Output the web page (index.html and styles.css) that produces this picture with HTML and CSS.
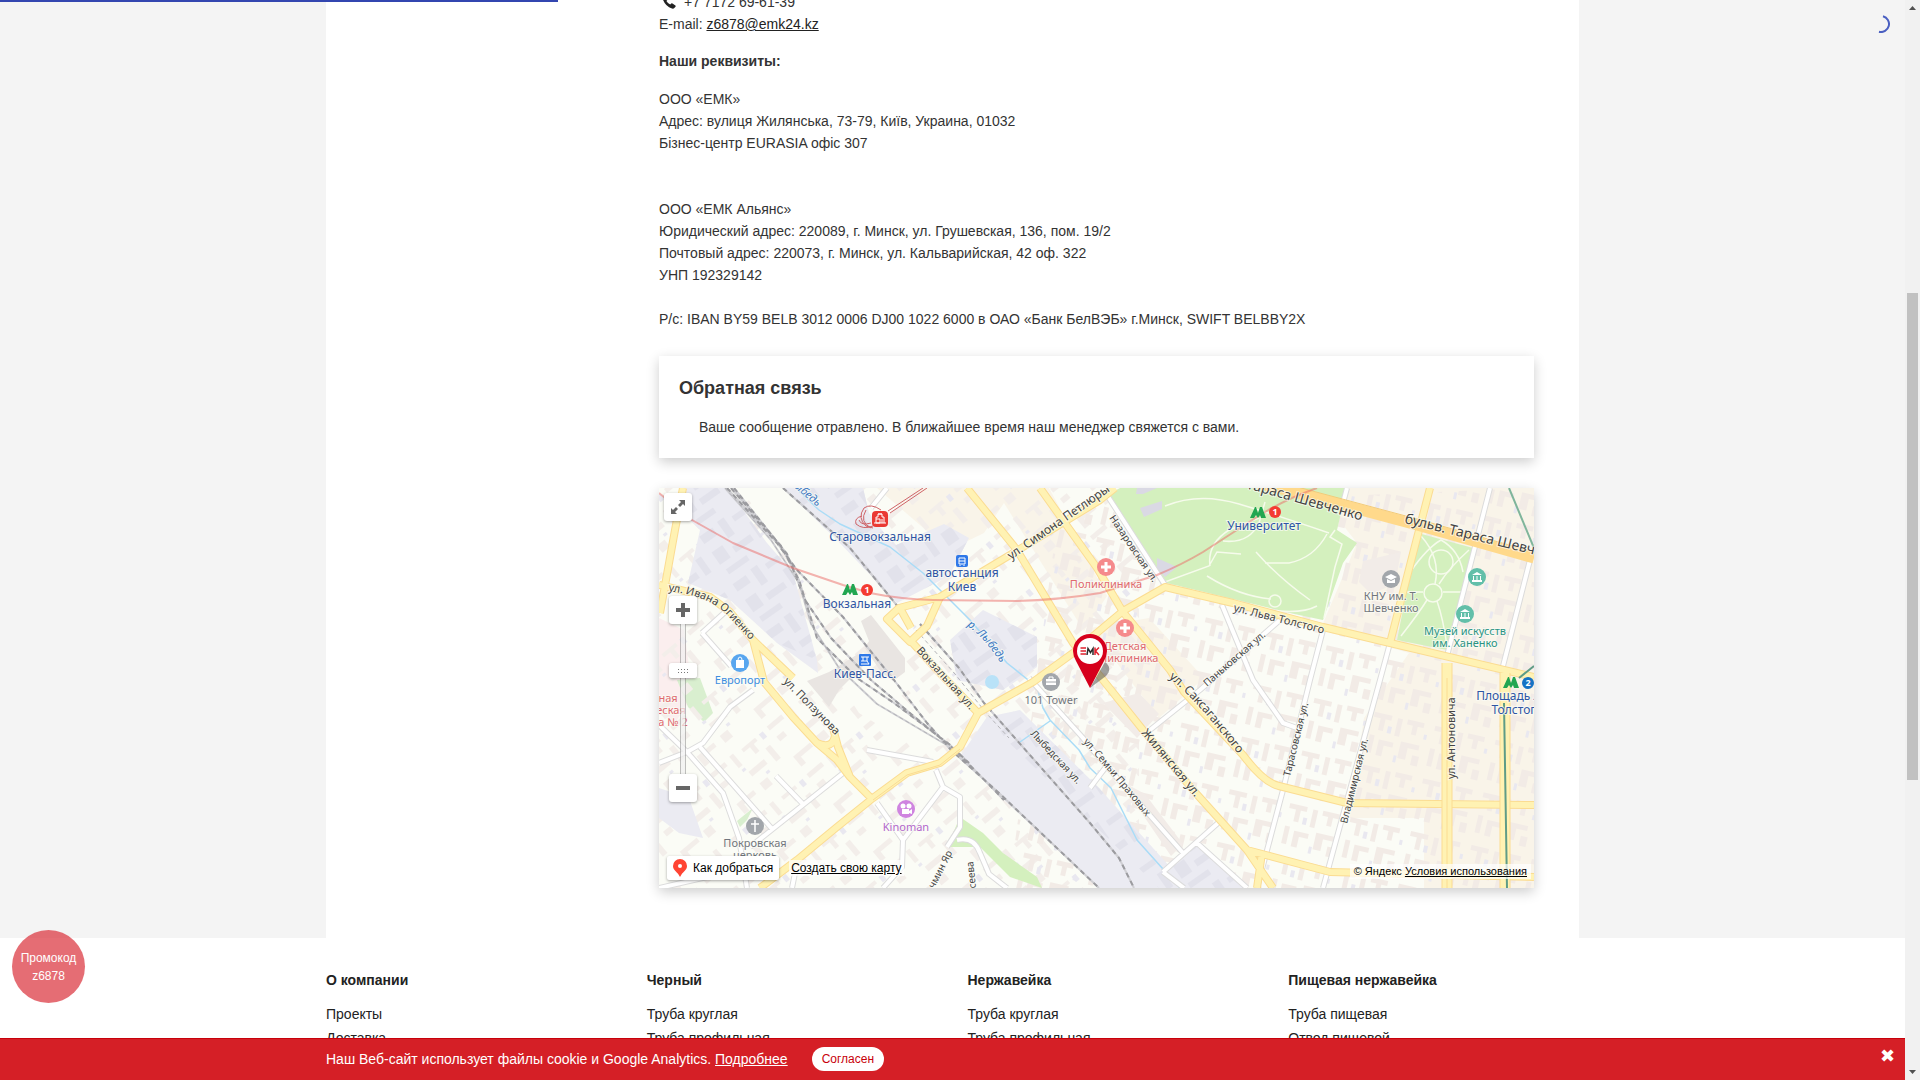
FILE: index.html
```html
<!DOCTYPE html>
<html lang="ru">
<head>
<meta charset="utf-8">
<meta name="viewport" content="width=device-width, initial-scale=1">
<title>Контакты — ЕМК</title>
<link rel="stylesheet" href="styles.css">
</head>
<body>
<div class="window">
  <div class="page">
    <main class="container content">
      <div class="column">
        <p class="phone">
          <svg class="phone-icon" viewBox="0 0 14 14" aria-hidden="true"><path fill="#222" d="M3.2 .6 5.600 3.600Q6 4.200 5.400 4.900L4.400 5.900Q5.800 8.200 8.200 9.600L9.200 8.600Q9.800 8.100 10.500 8.500L13.400 10.600Q13.900 11.100 13.500 11.700L12.300 13.100Q11.500 13.900 10 13.500Q3.200 11.200.8 4.200Q.3 2.700 1.100 1.700L2.200.7Q2.700.2 3.200.6Z"/></svg>
          <span>+7 7172 69-61-39</span>
        </p>
        <p>E-mail: <a class="mail" href="mailto:z6878@emk24.kz">z6878@emk24.kz</a></p>
        <h2 class="subtitle">Наши реквизиты:</h2>
        <p class="details">ООО «ЕМК»<br>Адрес: вулиця Жилянська, 73-79, Київ, Украина, 01032<br>Бізнес-центр EURASIA офіс 307<br><br><br>ООО «ЕМК Альянс»<br>Юридический адрес: 220089, г. Минск, ул. Грушевская, 136, пом. 19/2<br>Почтовый адрес: 220073, г. Минск, ул. Кальварийская, 42 оф. 322<br>УНП 192329142<br><br>P/c: IBAN BY59 BELB 3012 0006 DJ00 1022 6000 в ОАО «Банк БелВЭБ» г.Минск, SWIFT BELBBY2X</p>

        <section class="card">
          <h3>Обратная связь</h3>
          <p>Ваше сообщение отравлено. В ближайшее время наш менеджер свяжется с вами.</p>
        </section>

        <section class="map" aria-label="Карта">
          <svg class="map-canvas" viewBox="0 0 875 400" preserveAspectRatio="xMidYMid slice">
            <defs>
              <pattern id="west" width="74" height="62" patternUnits="userSpaceOnUse" patternTransform="rotate(-40)">
                <path fill="#f3eeea" d="M3 4h19v5H3zM29 3h5v15h-5zM43 5h18v4h-5v9h-5v-9h-8zM4 18h9v6H4zM34 27h20v6H34zM62 20h6v17h-6zM4 44h22v5H10v8H4zM35 43h10v9H35z"/>
                <path fill="#e9e8f0" d="M66 5h5v7h-5zM30 21h4v3h-4zM47 38h4v3h-4z"/>
              </pattern>
              <pattern id="east" width="62" height="54" patternUnits="userSpaceOnUse" patternTransform="rotate(13)">
                <path fill="#f2ebe6" d="M4 3h18v5h-6v12h-5V8H4zM28 4h5v18h-5zM38 3h17v5h-6v9h-5V8h-6zM4 26h5v18H4zM14 29h15v5h-9v11h-6zM36 26h19v5H44v12h-8zM50 37h7v10h-7z"/>
                <path fill="#e9e8f0" d="M20 14h4v7h-4zM32 41h3v7h-3zM57 14h3v5h-3z"/>
              </pattern>
              <pattern id="works" width="66" height="58" patternUnits="userSpaceOnUse" patternTransform="rotate(-35)">
                <path fill="#e2e2eb" d="M5 5h16v9H5zM28 3h8v20h-8zM43 7h17v6H43zM6 25h13v15H6zM26 32h22v7H26zM54 22h7v19h-7zM8 47h25v6H8z"/>
              </pattern>
              <path id="lbl-ogienko" d="M9 103Q50 108 67 126T96 157"/>
              <path id="lbl-polzunova" d="M124 194L181 252"/>
              <path id="lbl-vokzalnaya" d="M257 163L281 189 318 230"/>
              <path id="lbl-lybed" d="M308 138Q330 152 350 190"/>
              <path id="lbl-lybed-top" d="M129 -6Q150 12 172 30"/>
              <path id="lbl-petlyury" d="M352 72L464 -6"/>
              <path id="lbl-shev-a" d="M572 -4L715 36"/>
              <path id="lbl-shev-b" d="M745 35L930 80"/>
              <path id="lbl-saks" d="M510 190Q535 208 590 280"/>
              <path id="lbl-prah" d="M424 254Q448 280 496 340"/>
            </defs>
            <rect width="875" height="400" fill="#fbfcf6"/>
            <path fill="#f9f4e9" d="M218 0H390L448 108 425 143 345 15 325 45 290 62ZM655 0H875V400H765V330H690L705 230 750 165 662 140 698 55ZM431 140 490 130 545 190 500 230Z"/>
            <path fill="#fbeeee" d="M0 130 25 142 34 207 16 235 0 226Z"/>
            <path fill="#d9efcf" d="M18 192 41 190 54 225 45 234 29 219ZM78 333 94 320 88 332 81 339Z"/>
            <rect width="480" height="400" fill="url(#west)"/>
            <path fill="url(#east)" d="M400 20 875 0V400H350Z"/>
            <path fill="#fbfcf6" d="M82 0 124 0 191 60 256 136 240 180 184 129 138 82ZM158 160 235 200 290 256 260 262 200 225Z"/>
            <g id="industrial">
              <path fill="#ebebf2" d="M23 0H68L108 55 134 85 158 172 159 185 118 155 71 112 29 95 41 42 20 22ZM124 0H204L210 25 235 58 285 36 310 50 290 88 238 115 178 52ZM324 122 378 149V179L344 202 298 192 291 152ZM328 229 361 222 440 300 530 400H440L300 270ZM0 300 30 310 44 350 20 345 0 330ZM504 383 538 357 585 400H520Z"/>
              <path fill="url(#works)" d="M23 0H68L108 55 134 85 158 172 118 155 71 112 29 95 41 42ZM124 0H204L210 25 235 58 285 36 310 50 290 88 238 115 178 52ZM324 122 378 149V179L344 202 298 192 291 152ZM335 240 361 222 440 300 530 400H500ZM504 383 538 357 585 400H520Z"/>
              <path fill="#e9e5e2" d="M202 133 212 127 246 170 246 184 234 193 222 184 206 160 210 153ZM148 193 170 184 199 166 206 176 180 202 170 219Z"/>
              <path fill="#f2ece8" d="M704 73 742 64 736 96 712 106 700 94ZM444 215 480 205 500 226 478 250ZM460 292 486 306 524 356 512 368Z"/>
            </g>
            <g id="parks" fill="#d4f0be">
              <path d="M448 7 461 0H688L678 42 698 55 684 75 664 132 640 127 508 95 451 9Z"/>
              <path d="M759 45 814 60 788 162 738 152Z"/>
              <path d="M301 329 324 345 344 365 378 389 383 400 351 389 321 359 288 359Z"/>
              <path d="M588 363 603 367 598 382Z"/>
            </g>
            <path fill="#dad9e4" d="M478 0h20l-14 6h-7ZM481 20l22-7v8l-18 8ZM498 70l20 9-12 10-8-9Z"/>
            <g fill="none" stroke="#f6fbec" stroke-width="1.500">
              <path d="M506 18Q540 4 580 16T670 45M564 53Q590 56 600 35L606 14M597 64Q620 90 651 112M606 75H630Q655 70 668 46M506 94L550 78 558 64 582 66M548 88Q580 108 612 111M620 123Q645 125 658 118M676 42 671 49 683 56 676 79 665 130M551 78Q548 56 570 42L600 30"/>
              <circle cx="616" cy="113" r="6"/><circle cx="774" cy="105" r="9"/><circle cx="782" cy="74" r="12"/>
              <path d="M762 48Q782 70 776 96M810 62Q790 80 780 96M742 148Q760 125 768 112M788 158Q784 130 778 113M764 104H740M784 104H802M752 83Q768 60 782 52 800 62 804 84"/>
            </g>
            <path fill="none" stroke="#a9dcf7" stroke-width="1.500" stroke-linejoin="round" d="M137 0 160 22 181 36 231 59 264 85 311 132 348 175 378 199 384 220 391 232 420 262 431 280 452 300 458 312 478 352 521 400M361 254 391 233"/>
            <circle cx="333" cy="194" r="7" fill="#b9e2f8"/>
            <g fill="none" stroke-linejoin="round">
              <g id="minor-roads">
                <path stroke="#dcdcdc" stroke-width="6" d="M448 7 506 97M664 142 651 192 624 302 598 400M731 155 721 192 664 400M621 132 541 202 491 242M563 117 594 192 624 235 638 240M831 0 788 168M871 72 843 182M370 190 424 250 431 259 524 365M504 384 559 335M538 355 588 400M504 384 525 400M218 315 244 352 243 379 224 400M244 352 284 299 277 282M284 299 301 309V339L288 359M298 352Q315 348 321 365L330 386 348 400M0 275 28 264 44 255 71 219 94 202M0 237 28 264 64 305 80 350 88 400M41 259 114 342M188 282 91 359M43 145 72 178M65 125 43 145M117 288 144 316M208 262 274 274M0 400 70 384M431 300 446 280M688 0 684 15M212 20 228 0M133 400 136 385"/>
                <path stroke="#fff" stroke-width="4" d="M448 7 506 97M664 142 651 192 624 302 598 400M731 155 721 192 664 400M621 132 541 202 491 242M563 117 594 192 624 235 638 240M831 0 788 168M871 72 843 182M370 190 424 250 431 259 524 365M504 384 559 335M538 355 588 400M504 384 525 400M218 315 244 352 243 379 224 400M244 352 284 299 277 282M284 299 301 309V339L288 359M298 352Q315 348 321 365L330 386 348 400M0 275 28 264 44 255 71 219 94 202M0 237 28 264 64 305 80 350 88 400M41 259 114 342M188 282 91 359M43 145 72 178M65 125 43 145M117 288 144 316M208 262 274 274M0 400 70 384M431 300 446 280M688 0 684 15M212 20 228 0M133 400 136 385"/>
              </g>
              <g id="railways">
                <path stroke="#cfcfd3" stroke-width="2" d="M68 0 118 55 138 82 184 129 235 192 268 235 292 262 340 305 440 400M72 0 122 58 140 92 158 150 198 190 235 215 290 256 310 275M75 0 128 66 146 112 172 150 212 192 252 226 296 262 345 312M124 0 191 60 240 120M261 136 300 180 325 215 431 335 460 370 475 400M66 0 112 52 140 95 152 136 180 180 218 216 286 256"/>
                <path stroke="#9b9b9f" stroke-width="2" stroke-dasharray="5 4" d="M68 0 118 55 138 82 184 129 235 192 268 235 292 262 340 305 440 400M72 0 122 58 140 92 158 150 198 190 235 215 290 256 310 275M75 0 128 66 146 112 172 150 212 192 252 226 296 262 345 312M124 0 191 60 240 120M261 136 300 180 325 215 431 335 460 370 475 400"/>
                <path stroke="#b5b5b9" stroke-width="1" stroke-dasharray="4 3" d="M257 142 296 186 328 226 350 250M66 0 112 52 140 95 152 136 180 180 218 216 286 256"/>
              </g>
              <g id="main-roads">
                <path stroke="#fbdc92" stroke-width="8" d="M24 0 16 42 1 125M0 97 51 109 71 124 94 152 105 194 134 229 158 255 178 272 191 289 214 312M94 152 134 190M174 240 179 259 191 289M158 255Q174 262 176 247M308 0 358 62 414 155 444 192 484 242 534 302 588 362 614 400M381 0 438 80 464 124 511 182 525 204 584 267Q605 295 620 298L688 315 875 317M101 400 138 372 178 339 214 310 248 285 281 275 301 259 319 225 374 194 414 165 464 123 506 99 574 115 664 139 731 155 875 189M588 362 671 384 875 389M771 0 758 50 731 155M281 109 351 67 441 12 456 0M603 365 598 400M251 152 278 182 319 225M281 109 240 120 228 131 251 154 268 138 281 109M242 122 252 140"/>
                <path stroke="#fff2b3" stroke-width="6" d="M24 0 16 42 1 125M0 97 51 109 71 124 94 152 105 194 134 229 158 255 178 272 191 289 214 312M94 152 134 190M174 240 179 259 191 289M158 255Q174 262 176 247M308 0 358 62 414 155 444 192 484 242 534 302 588 362 614 400M381 0 438 80 464 124 511 182 525 204 584 267Q605 295 620 298L688 315 875 317M101 400 138 372 178 339 214 310 248 285 281 275 301 259 319 225 374 194 414 165 464 123 506 99 574 115 664 139 731 155 875 189M588 362 671 384 875 389M771 0 758 50 731 155M281 109 351 67 441 12 456 0M603 365 598 400M251 152 278 182 319 225M281 109 240 120 228 131 251 154 268 138 281 109M242 122 252 140"/>
                <path stroke="#fbdc92" stroke-width="11" d="M788 175V400M846 185V400"/>
                <path stroke="#fff2b3" stroke-width="9" d="M788 175V400M846 185V400"/>
                <path stroke="#fbdc92" stroke-width="1" d="M788 190V400M214 312 248 287 281 277 301 261"/>
                <path stroke="#ffd98b" stroke-width="11" d="M560 -14 631 3 758 37 875 70"/>
                <path stroke="#f3cb78" stroke-width="1" d="M631 -3 758 31 875 64"/>
              </g>
              <path stroke="#ec6a66" stroke-opacity=".5" stroke-width="2" d="M0 5 33 32 74 55 134 80 184 97 211 105Q240 111 274 112L358 113Q400 112 441 105L498 87Q524 76 544 64L598 29Q624 12 658 0"/>
              <path stroke="#7fb59b" stroke-width="2" d="M850 0 875 60"/>
              <path stroke="#5f9c86" stroke-width="2" d="M845 215 848 400M860 190 875 178"/>
              <path stroke="#cf6468" stroke-width="1" d="M268 0 231 25M264 0 229 23M205 20Q212 15 222 22M205 20Q198 30 207 38L214 40M203 28Q195 30 197 36 204 42 214 38M200 32Q202 38 212 35M207 22Q200 34 212 40"/>
            </g>

            <g class="street">
              <text><textPath href="#lbl-ogienko">ул. Ивана Огиенко</textPath></text>
              <text><textPath href="#lbl-polzunova">ул. Ползунова</textPath></text>
              <text><textPath href="#lbl-vokzalnaya">Вокзальная ул.</textPath></text>
              <text class="big"><textPath href="#lbl-petlyury">ул. Симона Петлюры</textPath></text>
              <text class="huge"><textPath href="#lbl-shev-a">в. Тараса Шевченко</textPath></text>
              <text class="huge"><textPath href="#lbl-shev-b">бульв. Тараса Шевченко</textPath></text>
              <text class="big"><textPath href="#lbl-saks">ул. Саксаганского</textPath></text>
              <text class="small"><textPath href="#lbl-prah">ул. Семьи Праховых</textPath></text>
              <text class="small" transform="translate(450 30) rotate(56)">Назаровская ул.</text>
              <text transform="translate(574 123) rotate(14)">ул. Льва Толстого</text>
              <text class="small" transform="translate(548 199) rotate(-41)">Паньковская ул.</text>
              <text class="big" transform="translate(482 245) rotate(50)">Жилянская ул.</text>
              <text class="small" transform="translate(371 246) rotate(47)">Лыбедская ул.</text>
              <text class="small" transform="translate(631 289) rotate(-76)">Тарасовская ул.</text>
              <text class="small" transform="translate(688 336) rotate(-76)">Владимирская ул.</text>
              <text transform="translate(796 291) rotate(-90)">ул. Антоновича</text>
              <text class="small" transform="translate(275 401) rotate(-63)">чмин Яр</text>
              <text class="small" transform="translate(317 400) rotate(-96)">сеева</text>
            </g>
            <g class="river">
              <text><textPath href="#lbl-lybed">р. Лыбедь</textPath></text>
              <text><textPath href="#lbl-lybed-top">Лыбедь</textPath></text>
            </g>
            <g class="poi transit">
              <text x="221" y="53">Старовокзальная</text>
              <text x="198" y="120">Вокзальная</text>
              <text x="303" y="89">автостанция</text>
              <text x="303" y="103">Киев</text>
              <text x="206" y="190">Киев-Пасс.</text>
              <text x="605" y="42">Университет</text>
              <text x="860" y="212">Площадь Льва</text>
              <text x="858" y="226">Толстого</text>
            </g>
            <g class="poi medical">
              <text x="447" y="100">Поликлиника</text>
              <text x="466" y="162">Детская</text>
              <text x="464" y="174">поликлиника</text>
              <text x="9" y="214">ная</text><text x="12" y="226">еская</text><text x="14" y="238">а № 2</text>
            </g>
            <g class="poi grey">
              <text x="732" y="112">КНУ им. Т.</text><text x="732" y="124">Шевченко</text>
              <text x="392" y="216">101 Tower</text>
              <text x="96" y="359">Покровская</text><text x="96" y="371">церковь</text>
            </g>
            <g class="poi museum"><text x="806" y="147">Музей искусств</text><text x="806" y="159">им. Ханенко</text></g>
            <g class="poi cinema"><text x="247" y="343">Kinoman</text></g>
            <g class="poi shop"><text x="81" y="196">Европорт</text></g>

            <g id="badges">
              <rect x="213" y="23" width="16" height="16" rx="4" fill="#ea3a34"/>
              <path fill="none" stroke="#fff" stroke-width="1" d="M217 31V29H219V26H223V29H225V31M219 26H223M217 31H221V35H217ZM223 31V35M215 35H227M225 31V35"/>
              <path fill="#22a651" d="M183 107 188 96H189L191 102 193 96H195L199 107H194L193 104 191 107 189 104 187 107Z"/>
              <circle cx="208" cy="102" r="6" fill="#f43b32"/>
              <path fill="#22a651" d="M591 30 596 19H597L599 25 601 19H603L607 30H602L601 27 599 30 597 27 595 30Z"/>
              <circle cx="616" cy="24" r="6" fill="#f43b32"/>
              <path fill="#22a651" d="M844 200 849 189H850L852 195 854 189H856L860 200H855L854 197 852 200 850 197 848 200Z"/>
              <circle cx="869" cy="195" r="6" fill="#1572c4"/>
              <rect x="297" y="67" width="12" height="12" rx="2" fill="#2f78e8"/>
              <path fill="none" stroke="#fff" stroke-width="1" d="M300 76V70H306V76ZM300 73H306M301 77V78M305 77V78"/>
              <rect x="200" y="166" width="12" height="12" rx="1" fill="#2f78e8"/>
              <path fill="none" stroke="#fff" stroke-width="1" d="M202 169H210M204 169V173M208 169V173M202 173H208L210 176M202 176H210"/>
              <g fill="#f58a8c"><circle cx="447" cy="79" r="9"/><circle cx="466" cy="140" r="9"/></g>
              <path stroke="#fff" stroke-width="3" d="M442 79H452M447 74V84M461 140H471M466 135V145"/>
              <g fill="#a2a6ab"><circle cx="732" cy="91" r="9"/><circle cx="392" cy="194" r="9"/><circle cx="96" cy="338" r="9"/></g>
              <path fill="#fff" d="M726 89 732 86 738 89 732 92ZM728 91 732 93 736 91V95H728ZM387 191h10v6h-10Z"/>
              <path stroke="#fff" stroke-width="1" fill="none" d="M390 191V189H394V191"/>
              <path stroke="#a2a6ab" stroke-width="1" d="M387 194H397"/>
              <path stroke="#fff" stroke-width="1.500" d="M96 332V344M92 336H100"/>
              <g fill="#62bfa9"><circle cx="818" cy="89" r="9"/><circle cx="806" cy="126" r="9"/></g>
              <path fill="#fff" d="M813 87 818 84 823 87ZM813 92h10v2h-10ZM801 124 806 121 811 124ZM801 129h10v2h-10Z"/>
              <path stroke="#fff" stroke-width="1" d="M814.500 88V92M818 88V92M821.500 88V92M802.500 125V129M806 125V129M809.500 125V129"/>
              <circle cx="247" cy="321" r="9" fill="#cf84e0"/>
              <circle cx="244" cy="318" r="2.500" fill="#fff"/><circle cx="250" cy="318" r="2.500" fill="#fff"/><path fill="#fff" d="M243 321h7v5h-7ZM250 323 253 321V326L250 325Z"/>
              <circle cx="81" cy="175" r="9" fill="#58a6ef"/>
              <path fill="#fff" d="M77 172h8v8h-8Z"/><path fill="none" stroke="#fff" d="M79 172Q79 169 81 169T83 172"/>
            </g>
            <g class="badge-text"><text x="208" y="105">1</text><text x="616" y="27">1</text><text x="869" y="198">2</text></g>

            <g id="placemark">
              <path fill="#444" fill-opacity=".5" d="M431 200 446 174Q454 180 447 188Z"/>
              <path fill="#d6001c" d="M431 200 417 173Q414 168 414 163A17 17 0 0 1 448 163Q448 168 445 173Z"/>
              <circle cx="431" cy="163" r="13" fill="#fff"/>
              <g fill="none" stroke-width="1.500"><path stroke="#df1f2e" d="M427 160H421.500M427 163H421.500M427 166H421.500M440 159.500 436.500 163 440 167M436 159.500V167"/><path stroke="#2b2b2b" d="M428 167 429 160.500 431.500 164.500 434 160.500V167"/></g>
            </g>
          </svg>

          <button class="map-btn expand" type="button" aria-label="Развернуть карту">
            <svg viewBox="0 0 28 28"><path fill="#666" d="M15 7h6v6l-2-2-3 3-2-2 3-3ZM13 21H7v-6l2 2 3-3 2 2-3 3Z"/></svg>
          </button>
          <div class="zoom">
            <button class="map-btn" type="button" aria-label="Приблизить"><svg viewBox="0 0 28 28"><path fill="#666" d="M12 7h4v5h5v4h-5v5h-4v-5H7v-4h5Z"/></svg></button>
            <input class="zoom-range" type="range" min="0" max="100" value="71" aria-label="Масштаб">
            <button class="map-btn" type="button" aria-label="Отдалить"><svg viewBox="0 0 28 28"><path fill="#666" d="M7 12h14v4H7Z"/></svg></button>
          </div>
          <div class="map-links">
            <button class="route" type="button">
              <svg viewBox="0 0 14 18" aria-hidden="true"><path fill="#f43" fill-rule="evenodd" d="M7 0a7 7 0 0 1 7 7c0 4-4 6-5.500 8.500L7 18 5.500 15.500C4 13 0 11 0 7a7 7 0 0 1 7-7Zm0 5a2 2 0 1 0 0 4 2 2 0 0 0 0-4Z"/></svg>
              <span>Как добраться</span>
            </button>
            <a class="create" href="#map">Создать свою карту</a>
          </div>
          <div class="copyright">© Яндекс <a href="#terms">Условия использования</a></div>
        </section>
      </div>
    </main>

    <footer class="footer">
      <div class="container footer-grid">
        <nav><h4>О компании</h4><a href="#projects">Проекты</a><a href="#delivery">Доставка</a></nav>
        <nav><h4>Черный</h4><a href="#b1">Труба круглая</a><a href="#b2">Труба профильная</a></nav>
        <nav><h4>Нержавейка</h4><a href="#n1">Труба круглая</a><a href="#n2">Труба профильная</a></nav>
        <nav><h4>Пищевая нержавейка</h4><a href="#p1">Труба пищевая</a><a href="#p2">Отвод пищевой</a></nav>
      </div>
    </footer>

    <div class="progress"></div>
    <svg class="spinner" viewBox="0 0 18 18" aria-hidden="true"><path fill="none" stroke="#4a5fc1" stroke-width="2" d="M11 1.300A8 8 0 0 1 7 16.800"/></svg>
    <div class="promo">Промокод<br>z6878</div>
    <div class="cookies">
      <div class="container cookies-row">
        <span>Наш Веб-сайт использует файлы cookie и Google Analytics. <a href="#more">Подробнее</a></span>
        <button class="agree" type="button">Согласен</button>
      </div>
      <button class="close" type="button" aria-label="Закрыть">✖</button>
    </div>
  </div>
  <div class="scrollbar" aria-hidden="true">
    <svg viewBox="0 0 15 16"><path fill="#505050" d="M4 10 7.500 6 11 10Z"/></svg>
    <div class="track"><div class="thumb"></div></div>
    <svg viewBox="0 0 15 16"><path fill="#505050" d="M4 6 7.500 10 11 6Z"/></svg>
  </div>
</div>
</body>
</html>
```
FILE: styles.css
```css
* { box-sizing: border-box; }

body {
  margin: 0;
  font: 14px/22px "Liberation Sans", Arial, sans-serif;
  color: #333;
  background: #f4f4f4;
}

p, h2, h3, h4 { margin: 0; }
button { margin: 0; padding: 0; border: 0; font-family: inherit; cursor: pointer; }

.window { display: flex; height: 100vh; overflow: hidden; }
.page { position: relative; flex: 1; min-width: 0; overflow: hidden; }
.container { width: calc(100% - 32px); max-width: 1253px; margin: 0 auto; }

/* The view is scrolled down, so the first line is cut by the window's top edge */
.content { margin-top: -9px; padding: 0 45px 50px 333px; background: #fff; }
.phone { display: flex; align-items: center; gap: 8px; padding-left: 3px; }
.phone-icon { width: 14px; height: 14px; }
.mail { color: #222; }
.subtitle { margin: 15px 0 16px; font-size: 14px; line-height: 22px; }

.card {
  margin: 26px 0 30px;
  padding: 20px;
  background: #fff;
  box-shadow: 0 4px 12px rgba(0, 0, 0, .2);
}
.card h3 { font-size: 18px; line-height: 24px; }
.card p { padding: 16px 20px 0; }

.map {
  position: relative;
  height: 400px;
  overflow: hidden;
  background: #fbfcf6;
  box-shadow: 0 4px 12px rgba(0, 0, 0, .2);
}
.map-canvas { display: block; width: 100%; height: 100%; }

.map text {
  font-family: "Noto Sans", sans-serif;
  paint-order: stroke;
  stroke: #fbfcf6;
  stroke-width: 2px;
  stroke-opacity: .7;
}
.street { font-size: 11px; fill: #444; }
.street .small { font-size: 10px; }
.street .big { font-size: 12px; }
.street .huge { font-size: 14px; }
.river { font-size: 11px; font-style: italic; fill: #3b78c2; }
.poi { font-size: 11px; text-anchor: middle; }
.transit { font-size: 12px; fill: #2f55a4; }
.medical { fill: #e0696f; }
.grey { fill: #72767d; }
.museum { fill: #2b9484; }
.cinema { fill: #b267cc; }
.shop { fill: #3e8ee0; }
.badge-text { font-size: 9px; font-weight: 700; text-anchor: middle; fill: #fff; }
.map .badge-text text { stroke: none; }

.map-btn {
  display: block;
  width: 28px;
  height: 28px;
  background: #fff;
  border-radius: 3px;
  box-shadow: 0 1px 3px rgba(0, 0, 0, .35);
}
.map-btn svg { display: block; width: 28px; height: 28px; }
.expand { position: absolute; left: 5px; top: 5px; }
.zoom { position: absolute; left: 10px; top: 108px; display: flex; flex-direction: column; align-items: center; }
.zoom-range {
  appearance: none;
  writing-mode: vertical-lr;
  direction: rtl;
  width: 28px;
  height: 150px;
  margin: 0;
  background: linear-gradient(90deg, rgba(150, 150, 150, .6) 1px, rgba(240, 240, 240, .7) 1px 5px, rgba(150, 150, 150, .6) 5px) center / 6px 100% no-repeat;
}
.zoom-range::-webkit-slider-thumb {
  appearance: none;
  width: 28px;
  height: 15px;
  border-radius: 3px;
  background:
    linear-gradient(#fff, #fff) left / 9px 100% no-repeat,
    linear-gradient(#fff, #fff) right / 8px 100% no-repeat,
    linear-gradient(#fff, #fff) top / 100% 6px no-repeat,
    linear-gradient(#fff, #fff) bottom / 100% 5px no-repeat,
    linear-gradient(#777, #777) 0 0 / 1px 1px no-repeat,
    repeating-linear-gradient(90deg, transparent 0 1px, #fff 1px 3px),
    repeating-linear-gradient(#777 0 1px, #fff 1px 3px);
  box-shadow: 0 1px 3px rgba(0, 0, 0, .35);
}
.map-links { position: absolute; left: 8px; bottom: 8px; display: flex; align-items: center; gap: 10px; }
.route {
  display: flex;
  align-items: center;
  gap: 6px;
  height: 24px;
  padding: 0 6px;
  background: #fff;
  border-radius: 2px;
  box-shadow: 0 1px 3px rgba(0, 0, 0, .35);
  font-size: 12px;
  color: #000;
}
.route svg { width: 14px; height: 18px; }
.create { padding: 0 2px; font-size: 12px; line-height: 16px; color: #000; background: rgba(255, 255, 255, .7); }
.copyright {
  position: absolute;
  right: 3px;
  bottom: 9px;
  padding: 0 4px;
  font-size: 11px;
  line-height: 15px;
  color: #000;
  background: rgba(255, 255, 255, .7);
}
.copyright a { color: #000; }

.footer { padding-top: 31px; background: #fff; min-height: 200px; }
.footer-grid { display: grid; grid-template-columns: repeat(4, 1fr); gap: 30px; }
.footer nav { display: flex; flex-direction: column; }
.footer h4 { margin-bottom: 11px; font-size: 14px; line-height: 22px; color: #222; }
.footer a { line-height: 24px; color: #222; text-decoration: none; }

.progress { position: absolute; left: 0; top: 0; width: 29.300%; height: 2px; background: #3346b0; }
.spinner { position: absolute; right: 15px; top: 15px; width: 18px; height: 18px; }
.promo {
  position: absolute;
  left: 12px;
  bottom: 77px;
  width: 73px;
  height: 73px;
  padding-top: 19px;
  border-radius: 50%;
  background: rgba(220, 60, 70, .75);
  color: #fff;
  font-size: 12px;
  line-height: 18px;
  text-align: center;
}
.cookies { position: absolute; left: 0; right: 0; bottom: 0; height: 42px; background: #d51f26; border-top: 1px solid #c8000b; color: #fff; }
.cookies-row { display: flex; align-items: center; gap: 24px; height: 39px; }
.cookies a { color: #fff; }
.agree { height: 24px; padding: 0 10px; border-radius: 12px; background: #fff; color: #c8000b; font-size: 12px; }
.close { position: absolute; right: 10px; top: 6px; background: none; color: #fff; font-size: 18px; line-height: 22px; }

.scrollbar { display: flex; flex-direction: column; width: 15px; background: #f1f1f1; }
.scrollbar svg { display: block; width: 15px; height: 16px; }
.track { flex: 1; padding: 0 2px; }
.thumb { position: relative; top: 26.400%; height: 46.500%; background: #c1c1c1; }
```
